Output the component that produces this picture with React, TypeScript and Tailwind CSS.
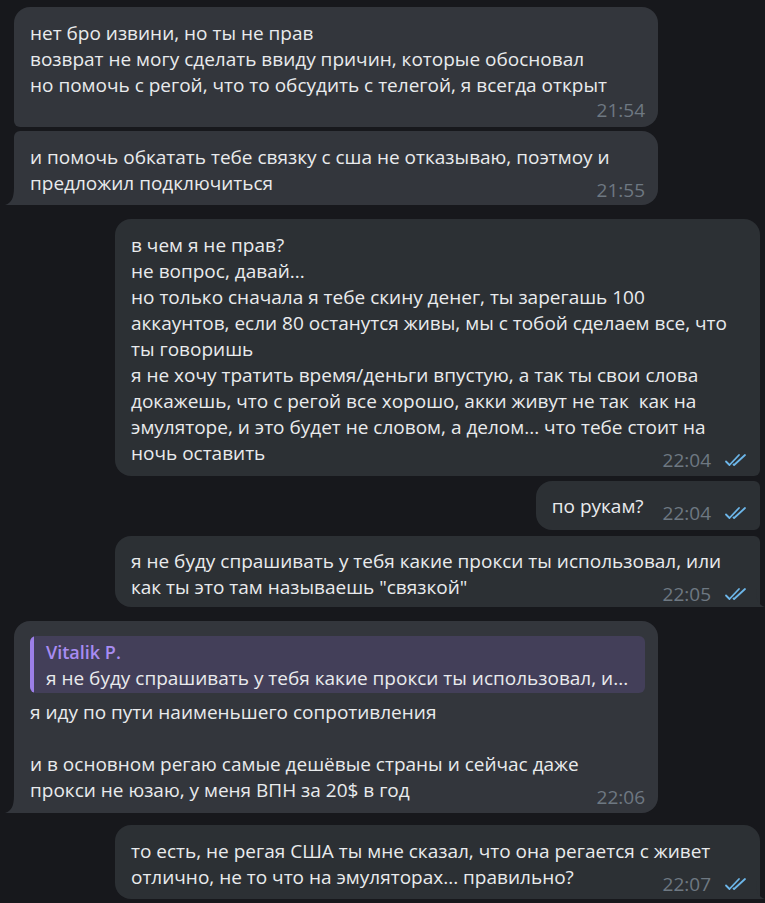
import React from "react";

// ─── Types ────────────────────────────────────────────────────────────────────

type Corner = "big" | "small" | "tail";

type BubbleProps = {
  side: "in" | "out";
  lines: string[];
  time: string;
  timeOwnRow?: boolean;
  tl: Corner;
  tr: Corner;
  br: Corner;
  bl: Corner;
  reply?: { name: string; text: string };
  className?: string;
};

const radius = (c: Corner) => (c === "big" ? 16 : c === "small" ? 6 : 0);

// ─── Icons ────────────────────────────────────────────────────────────────────

const DoubleCheck = () => (
  <svg width="26" height="14" viewBox="0 0 26 14" fill="none" className="shrink-0">
    <path d="M2 8.5l3.5 3.5L15 2" stroke="#6cb6e9" strokeWidth="1.8" strokeLinecap="round" strokeLinejoin="round" />
    <path d="M9.5 11.5l0.6 0.5L21 2" stroke="#6cb6e9" strokeWidth="1.8" strokeLinecap="round" strokeLinejoin="round" />
  </svg>
);

const TailLeft = ({ color }: { color: string }) => (
  <svg width="12" height="18" viewBox="0 0 12 18" className="absolute bottom-0 -left-[9px]">
    <path d="M12 0 V18 H0 C6 16 9 12 9 0 Z" fill={color} />
  </svg>
);

const TailRight = ({ color }: { color: string }) => (
  <svg width="12" height="18" viewBox="0 0 12 18" className="absolute bottom-0 -right-[5px]">
    <path d="M0 0 V18 H12 C6 16 3 12 3 0 Z" fill={color} />
  </svg>
);

// ─── Bubble ───────────────────────────────────────────────────────────────────

const textCls = "h-[26px] text-[19px] leading-[26px] text-[#e9ebed] whitespace-nowrap";

const Bubble = ({ side, lines, time, timeOwnRow, tl, tr, br, bl, reply, className = "" }: BubbleProps) => {
  const bg = side === "in" ? "#33363c" : "#2c3034";
  const last = lines[lines.length - 1];
  const body = timeOwnRow ? lines : lines.slice(0, -1);

  const meta = (
    <div className="flex items-center gap-[13px] text-[19px] leading-[18px] text-[#6e7882] whitespace-nowrap">
      <span>{time}</span>
      {side === "out" && <DoubleCheck />}
    </div>
  );

  return (
    <div
      className={`relative ${side === "in" ? "self-start ml-[14px] pl-4 pr-[13px]" : "self-end mr-[5px] pl-4 pr-[10px]"} ${className}`}
      style={{
        backgroundColor: bg,
        borderRadius: `${radius(tl)}px ${radius(tr)}px ${radius(br)}px ${radius(bl)}px`,
      }}
    >
      {reply && (
        <div className="flex mb-[6px] rounded-[6px] bg-[#433f59] overflow-hidden">
          <div className="w-[4px] bg-[#9c7fe8] rounded-l-[6px]" />
          <div className="pl-[12px] pr-3 pt-[3px] pb-[2px]">
            <div className="text-[18px] leading-[26px] font-semibold text-[#a88cf2]">{reply.name}</div>
            <div className={textCls}>{reply.text}</div>
          </div>
        </div>
      )}
      {body.map((l, i) => (
        <div key={i} className={textCls}>
          {l}
        </div>
      ))}
      {timeOwnRow ? (
        <div className="flex justify-end h-[24px] items-center">{meta}</div>
      ) : (
        <div className="flex items-end justify-between gap-[19px]">
          <div className={textCls}>{last}</div>
          <div className="-mb-[3px]">{meta}</div>
        </div>
      )}
      {bl === "tail" && <TailLeft color={bg} />}
      {br === "tail" && <TailRight color={bg} />}
    </div>
  );
};

// ─── App ──────────────────────────────────────────────────────────────────────

export default function App() {
  return (
    <div
      className="w-[765px] h-[903px] overflow-hidden bg-[#17181c] flex flex-col pt-[7px]"
      style={{ fontFamily: '"Open Sans", "Noto Sans", sans-serif' }}
    >
      <Bubble
        side="in"
        tl="big" tr="big" br="big" bl="small"
        time="21:54"
        timeOwnRow
        className="w-[644px] pt-[13px] pb-[5px]"
        lines={[
          "нет бро извини, но ты не прав",
          "возврат не могу сделать ввиду причин, которые обосновал",
          "но помочь с регой, что то обсудить с телегой, я всегда открыт",
        ]}
      />
      <Bubble
        side="in"
        tl="small" tr="big" br="big" bl="tail"
        time="21:55"
        className="w-[644px] mt-[4px] pt-[13px] pb-[9px]"
        lines={[
          "и помочь обкатать тебе связку с сша не отказываю, поэтмоу и",
          "предложил подключиться",
        ]}
      />
      <Bubble
        side="out"
        tl="big" tr="big" br="small" bl="big"
        time="22:04"
        className="w-[645px] mt-[14px] pt-[13px] pb-[10px]"
        lines={[
          "в чем я не прав?",
          "не вопрос, давай...",
          "но только сначала я тебе скину денег, ты зарегашь 100",
          "аккаунтов, если 80 останутся живы, мы с тобой сделаем все, что",
          "ты говоришь",
          "я не хочу тратить время/деньги впустую, а так ты свои слова",
          "докажешь, что с регой все хорошо, акки живут не так\u00a0 как на",
          "эмуляторе, и это будет не словом, а делом... что тебе стоит на",
          "ночь оставить",
        ]}
      />
      <Bubble
        side="out"
        tl="big" tr="small" br="small" bl="big"
        time="22:04"
        className="mt-[5px] pt-[12px] pb-[11px]"
        lines={["по рукам?"]}
      />
      <Bubble
        side="out"
        tl="big" tr="small" br="tail" bl="big"
        time="22:05"
        className="w-[645px] mt-[6px] pt-[12px] pb-[7px]"
        lines={[
          "я не буду спрашивать у тебя какие прокси ты использовал, или",
          "как ты это там называешь \"связкой\"",
        ]}
      />
      <Bubble
        side="in"
        tl="big" tr="big" br="big" bl="tail"
        time="22:06"
        className="w-[644px] mt-[14px] pt-[15px] pb-[10px]"
        reply={{ name: "Vitalik P.", text: "я не буду спрашивать у тебя какие прокси ты использовал, и..." }}
        lines={[
          "я иду по пути наименьшего сопротивления",
          "\u00a0",
          "и в основном регаю самые дешёвые страны и сейчас даже",
          "прокси не юзаю, у меня ВПН за 20$ в год",
        ]}
      />
      <Bubble
        side="out"
        tl="big" tr="big" br="tail" bl="big"
        time="22:07"
        className="w-[645px] mt-[12px] pt-[13px] pb-[9px]"
        lines={[
          "то есть, не регая США ты мне сказал, что она регается с живет",
          "отлично, не то что на эмуляторах... правильно?",
        ]}
      />
    </div>
  );
}
